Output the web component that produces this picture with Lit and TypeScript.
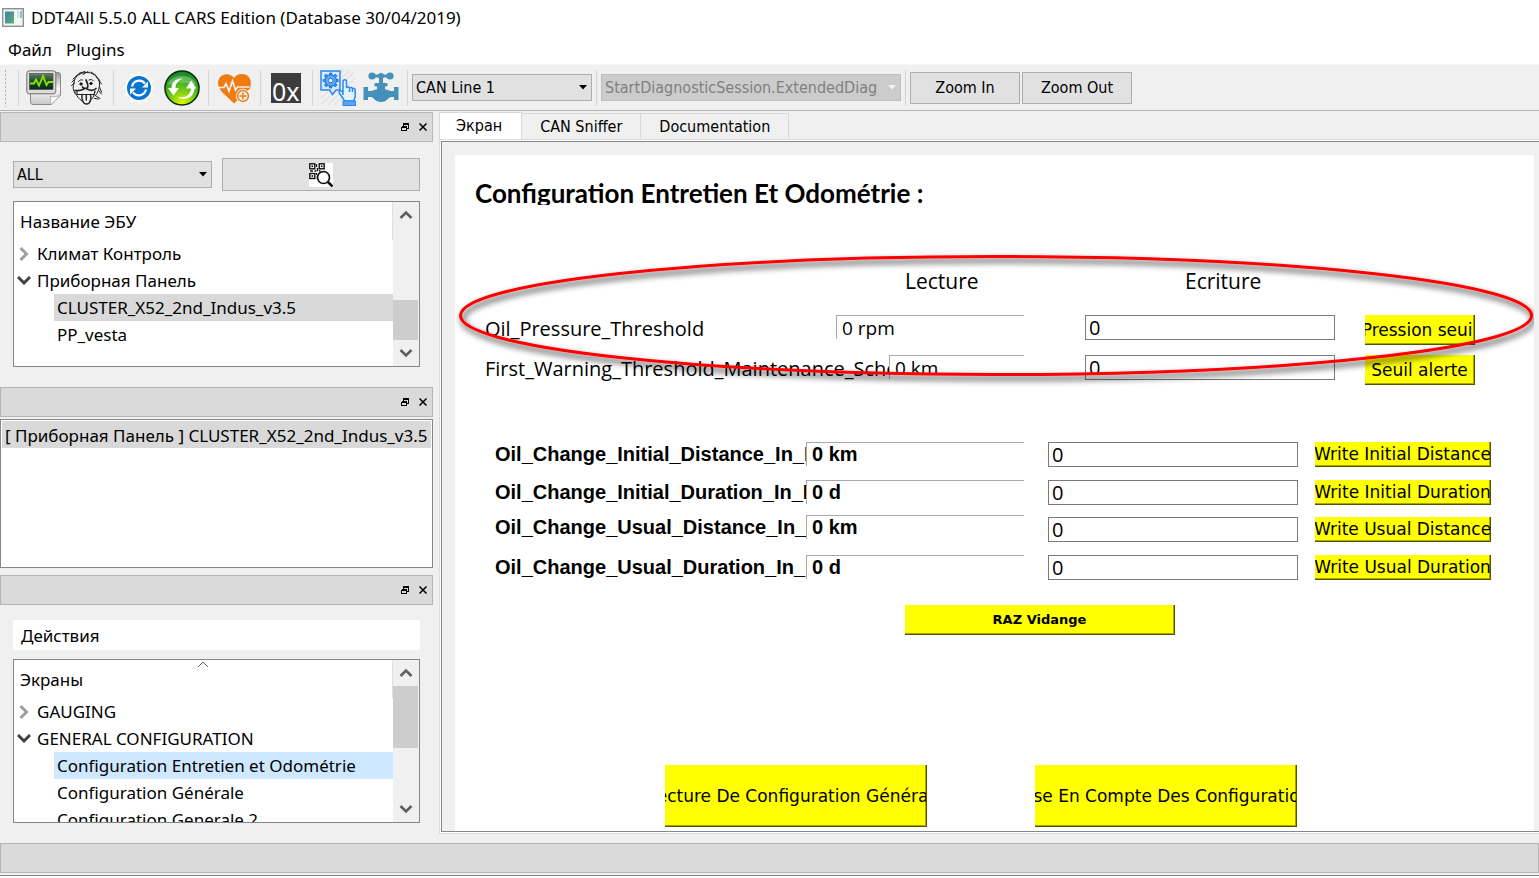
import { LitElement, html, css, svg, nothing } from "lit";
import { customElement, property } from "lit/decorators.js";
import { classMap } from "lit/directives/class-map.js";

const monitorIcon = html`<svg viewBox="0 0 36 36" width="36" height="36" aria-hidden="true">
  <defs>
    <linearGradient id="paper" x1="0" y1="0" x2="0" y2="1"><stop offset="0" stop-color="#999"/><stop offset=".5" stop-color="#fafafa"/><stop offset="1" stop-color="#c8c8c8"/></linearGradient>
    <linearGradient id="screen" x1="0" y1="0" x2="0" y2="1"><stop offset="0" stop-color="#6a7b6a"/><stop offset=".5" stop-color="#14492c"/><stop offset="1" stop-color="#0a2a18"/></linearGradient>
  </defs>
  <path d="M10 2.500H32a2.500 2.500 0 0 1 2.500 2.500V25l-9 9.500H7a2.500 2.500 0 0 1-2.500-2.500V10z" fill="url(#paper)" stroke="#8a8a8a"/>
  <path d="M34.500 25l-9 9.500c-2-1 .5-5-1.500-8 3 .8 8 0 10.500-1.500z" fill="#fff" stroke="#999" stroke-width=".7"/>
  <rect x=".8" y=".8" width="29" height="23" rx="2.500" fill="#dcdcdc" stroke="#6f6f6f"/>
  <rect x="3.500" y="3.500" width="23.500" height="16" fill="url(#screen)" stroke="#444" stroke-width=".6"/>
  <path d="M4 13.500h4l2-4 3 6 4-9.500 3.500 9 2-3h4.500" fill="none" stroke="#8be000" stroke-width="1.800"/>
</svg>`;

const faceIcon = html`<svg viewBox="0 0 36 36" width="36" height="36" fill="none" stroke="#222" stroke-width="1" stroke-linecap="round" aria-hidden="true">
  <path d="M5 13C5 6 12 2 19 2.500c6 .5 11 5 11.500 10.500.4 5-1.500 10-4.500 13"/>
  <path d="M5 13c-1.500 4-1 7 1 10.500M3 12l3-3M2.500 15.500l3-2.500M4 9l4-3.500M7 6l4-3M11 3l5-1.500M14 4.500l5-3M22 2l5 3.500M27 7l4 3.500M29.500 10l3 4M30.500 17l2 5M30 21l2.500 3M27 26l4 2.500M25.500 28.500l4 .5"/>
  <path d="M9.500 11.500c1-1.500 2.500-2 4-1.500M20 10c1.500-1 3.500-.5 4.500 1"/>
  <circle cx="12" cy="14" r="1.200" fill="#111"/><circle cx="22" cy="13.500" r="1.200" fill="#111"/>
  <path d="M17 10c1.500 3 2.500 5.500 1.500 7.500-1.500 1.500-4 1-5-.5M15 19c-2.500 1.200-6 2-9 1.500M18 19c4 2 7 1.500 9-.5" stroke-width="1.700"/>
  <path d="M6 22.500c2 4 4 6.500 7 8.500M26 21.500c-.5 4-2.500 7.500-5 9M8 24.500h17M8 21v3.500M26 21l-1 3.500"/>
  <path d="M13 24.500c-.5 4 .5 9.500 4.500 9.500s5-5.500 4-9.500M17.300 25v5" stroke-width="1.400"/>
</svg>`;

const gearTeeth = Array.from({ length: 12 }, (_, i) => i * 30);
const gearIcon = html`<svg viewBox="0 0 36 36" width="36" height="36" aria-hidden="true">
  <g fill="#fcfcfc" stroke="#e2e2e2" stroke-width=".5">
    ${gearTeeth.map((a) => svg`<path d="M14.500 5L16.500 1h3L21.500 5z" transform="rotate(${a} 18 18)"/>`)}
    <circle cx="18" cy="18" r="14.500"/>
  </g>
  <circle cx="18" cy="18" r="12" fill="#0a74d1"/>
  <g fill="none" stroke="#fff" stroke-width="2.200"><path d="M11 16.500a7.300 7.300 0 0 1 13-2.800"/><path d="M25 19.500a7.300 7.300 0 0 1-13 2.800"/></g>
  <path d="M27 11.500v6h-6zM9 24.500v-6h6z" fill="#fff"/>
</svg>`;

const refreshIcon = html`<svg viewBox="0 0 36 36" width="36" height="36" aria-hidden="true">
  <defs><radialGradient id="green" cx=".5" cy=".95" r=".9"><stop offset="0" stop-color="#e4f400"/><stop offset=".5" stop-color="#62c41c"/><stop offset="1" stop-color="#138a2c"/></radialGradient></defs>
  <circle cx="18" cy="18" r="17" fill="url(#green)" stroke="#0b2a08" stroke-width="1.500"/>
  <path d="M4 15C6 3 30 3 32 15c-7-3-21-3-28 0z" fill="#fff" opacity=".25"/>
  <path d="M19 8.500C12 8 7.500 12 7.500 18H4l5.500 7.500L15 18h-3.500c0-4.500 3-8 7.500-9.500z" fill="#fff"/>
  <path d="M12.500 26.500c7 3 14-1 14.500-8h-5L27 10.500 32.500 18.500H30.500C30 28 20 32 12.500 26.500z" fill="#fff"/>
</svg>`;

const heartIcon = html`<svg viewBox="0 0 36 36" width="36" height="36" aria-hidden="true">
  <path d="M18 8C14.500 3 7 3 3.500 8 .5 13 2.500 18.500 7 23l11 10.500 16-15C36 12 34.500 7.500 30.500 5 26 3 20.500 4 18 8z" fill="#f07c10"/>
  <path d="M1 17.500h7l2-4 3 7.500 3.500-10 3 9 2-3h12" fill="none" stroke="#f0f0f0" stroke-width="1.700"/>
  <circle cx="27" cy="26" r="7.200" fill="#f0f0f0"/>
  <circle cx="27" cy="26" r="5.400" fill="none" stroke="#f07c10" stroke-width="1.500"/>
  <path d="M27 22.500v7M23.500 26h7" stroke="#f07c10" stroke-width="1.500"/>
</svg>`;

const handIcon = html`<svg viewBox="0 0 36 36" width="36" height="36" aria-hidden="true">
  <path d="M2 34L28 8M8 35L35 8M1 28l10-10M14 35l10-10M20 4l4-4M22 8l8-8M28 8l6-6" stroke="#e2e2e2" stroke-width="1.200"/>
  <path d="M1 1h19v19h-4l-3.500 4.500L9.500 20H1z" fill="#d8ebff" stroke="#2a86f0" stroke-width="1.500"/>
  <g fill="#62a9f5" stroke="#1a74e0" stroke-width="1">
    ${[0, 45, 90, 135, 180, 225, 270, 315].map((a) => svg`<path d="M9.300 5l.4-2h2l.4 2z" transform="rotate(${a} 10.700 10.500)"/>`)}
    <circle cx="10.700" cy="10.500" r="5.600"/>
  </g>
  <circle cx="10.700" cy="10.500" r="2.300" fill="#eef6ff" stroke="#1a74e0"/>
  <path d="M23 25V11.500c0-2.500 3.500-2.500 3.500 0V18c.5-1.500 3-1.300 3 .3.500-1.300 3-1 3 .6.600-1 2.700-.6 2.700 1V26c0 2-1.200 3-1.500 5H24.500c-.5-2.500-5-6-5.500-9 .3-2 2.500-1.500 4 .5M29.500 18.500V22M32.500 19V22" fill="#e6f2ff" stroke="#2a86f0" stroke-width="1.500"/>
  <rect x="23" y="31" width="12.500" height="4.500" fill="#5aa5f5" stroke="#2a86f0"/>
</svg>`;

const valveIcon = html`<svg viewBox="0 0 36 36" width="36" height="36" fill="#4490b8" aria-hidden="true">
  <circle cx="9" cy="6" r="3.600"/><circle cx="27" cy="6" r="3.600"/><rect x="9" y="4.500" width="18" height="3"/><circle cx="18" cy="6" r="3"/>
  <rect x="16" y="6" width="4" height="9"/><rect x="11.500" y="13" width="13" height="3.500" rx="1.200"/>
  <path d="M14 16h8v3.500h1c2 0 3 1.500 5 1.500h3v-4h4.500v13H31v-3h-3c-2.500 0-4 5-10 5s-7.500-5-10-5H5v3H.5V17H5v4h3c2 0 3-1.500 5-1.500h1z"/>
</svg>`;

const qrIcon = html`<svg viewBox="0 0 24 24" width="24" height="24" aria-hidden="true">
  <rect width="24" height="24" fill="#fff"/>
  <g fill="none" stroke="#111" stroke-width="1.400">
    <rect x=".8" y=".8" width="5" height="5"/><rect x="10.200" y=".8" width="5" height="5"/><rect x=".8" y="10.500" width="5" height="5"/>
    <path d="M7.500 1v3M8.500 5v3M1 8h3M5.500 8h2M10 8h1.500M7.500 10v2M8.500 13.500V16"/>
    <circle cx="14.500" cy="14.500" r="6" fill="#fff" stroke-width="1.700"/>
  </g>
  <rect x="2.500" y="2.500" width="1.600" height="1.600"/><rect x="11.900" y="2.500" width="1.600" height="1.600"/><rect x="2.500" y="12.200" width="1.600" height="1.600"/>
  <path d="M19 19l4.500 4.500" stroke="#111" stroke-width="2.600"/>
</svg>`;

const reset = css`
  *, *::before, *::after { box-sizing: border-box; }
  button, input, select { font: inherit; color: inherit; margin: 0; border-radius: 0; }
  button { padding: 0; border: 0; background: none; }
`;

@customElement("dock-title")
class DockTitle extends LitElement {
  @property({ type: Boolean }) plain = false;
  static styles = [reset, css`
    :host { display: flex; align-items: center; justify-content: flex-end; gap: 8px; height: 30px; flex: none;
      padding-right: 4px; border: 1px solid #b6b6b6; background: #dadada; }
    button { display: flex; width: 10px; height: 10px; }
  `];
  render() {
    return this.plain ? nothing : html`
      <button aria-label="Float"><svg width="10" height="10" viewBox="0 0 10 10" fill="none" stroke="#000" shape-rendering="crispEdges"><path d="M3 4V1.500h5.500V6H6M3 2h6M1 5h5.500M1.500 4.500v4h5v-4h-5"/></svg></button>
      <button aria-label="Close"><svg width="10" height="10" viewBox="0 0 10 10"><path d="M1.500 1.500l7 7M8.500 1.500l-7 7" stroke="#000" stroke-width="1.500"/></svg></button>`;
  }
}

interface Node { text: string; open?: boolean; child?: boolean; mark?: "grey" | "blue"; }

@customElement("item-tree")
class ItemTree extends LitElement {
  @property() heading = "";
  @property({ attribute: false }) nodes: Node[] = [];
  @property({ type: Number }) before = 0;
  @property({ type: Number }) thumb = 0;
  @property({ type: Boolean }) sorted = false;
  static styles = [reset, css`
    :host { display: flex; border: 1px solid #828790; background: #fff; overflow: hidden; }
    .list { flex: 1; min-width: 0; display: flex; flex-direction: column; }
    .head { flex: none; height: 38px; line-height: 40px; padding-left: 6px; border-right: 1px solid #dedede; position: relative; }
    .sort { position: absolute; left: 50%; top: 1px; margin-left: -6px; }
    .row { flex: none; display: flex; align-items: center; height: 27px; white-space: nowrap; }
    .twist { width: 23px; padding-left: 3px; display: flex; }
    .child { margin-left: 40px; padding-left: 3px; }
    .grey { background: #d9d9d9; }
    .blue { background: #cde8ff; }
    .bar { flex: none; width: 26px; display: flex; flex-direction: column; background: #f0f0f0; }
    .bar button { height: 26px; flex: none; display: flex; align-items: center; justify-content: center; }
    .track { flex: 1; }
    .thumb { width: 25px; background: #cdcdcd; }
    svg { fill: none; }
  `];
  render() {
    return html`
      <div class="list" role="tree" aria-label=${this.heading}>
        <div class="head">${this.heading}${this.sorted ? html`<svg class="sort" width="12" height="7"><path d="M1 6l5-5 5 5" stroke="#666"/></svg>` : nothing}</div>
        ${this.nodes.map((n) => html`
          <div role="treeitem" class=${classMap({ row: true, child: !!n.child, grey: n.mark === "grey", blue: n.mark === "blue" })}>
            ${n.child ? nothing : html`<span class="twist">${n.open
              ? html`<svg width="14" height="12"><path d="M1 2l6 6 6-6" stroke="#404040" stroke-width="3"/></svg>`
              : html`<svg width="14" height="14"><path d="M3.500 1l6 6-6 6" stroke="#a0a0a0" stroke-width="3"/></svg>`}</span>`}
            <span>${n.text}</span>
          </div>`)}
      </div>
      <div class="bar">
        <button aria-label="Scroll up"><svg width="14" height="10"><path d="M1.500 8L7 2.500 12.500 8" stroke="#606060" stroke-width="2.600"/></svg></button>
        <div class="track"><div style="height:${this.before}%"></div><div class="thumb" style="height:${this.thumb}%"></div></div>
        <button aria-label="Scroll down"><svg width="14" height="10"><path d="M1.500 2L7 7.500 12.500 2" stroke="#606060" stroke-width="2.600"/></svg></button>
      </div>`;
  }
}

const ecus: Node[] = [
  { text: "Климат Контроль" },
  { text: "Приборная Панель", open: true },
  { text: "CLUSTER_X52_2nd_Indus_v3.5", child: true, mark: "grey" },
  { text: "PP_vesta", child: true },
];
const screens: Node[] = [
  { text: "GAUGING" },
  { text: "GENERAL CONFIGURATION", open: true },
  { text: "Configuration Entretien et Odométrie", child: true, mark: "blue" },
  { text: "Configuration Générale", child: true },
  { text: "Configuration Generale 2", child: true },
];
const thresholds = [
  { id: "oil", cls: "oil", label: "Oil_Pressure_Threshold", value: "0 rpm", action: "Pression seuil" },
  { id: "warn", cls: "warn", label: "First_Warning_Threshold_Maintenance_Schedule", value: "0 km", action: "Seuil alerte" },
];
const changes = [
  { id: "c1", label: "Oil_Change_Initial_Distance_In_Km", value: "0 km", action: "Write Initial Distance", low: false },
  { id: "c2", label: "Oil_Change_Initial_Duration_In_Days", value: "0 d", action: "Write Initial Duration", low: false },
  { id: "c3", label: "Oil_Change_Usual_Distance_In_Km", value: "0 km", action: "Write Usual Distance", low: true },
  { id: "c4", label: "Oil_Change_Usual_Duration_In_Days", value: "0 d", action: "Write Usual Duration", low: false },
];

@customElement("screen-form")
class ScreenForm extends LitElement {
  static styles = [reset, css`
    :host { display: block; position: relative; background: #fff; overflow: hidden; padding-top: 20px;
      font: 20px/26px "Open Sans", "Noto Sans", sans-serif; color: #000; }
    h1 { margin: 0 20px; height: 30px; overflow: hidden; font: bold 26px/36px Lato, "Open Sans", sans-serif; }
    .heads { display: grid; grid-template-columns: 280px 1fr; margin: 60px 0 0 450px; font-size: 21px; line-height: 32px; }
    .row { display: grid; height: 30px; margin: 0 0 10px 30px; align-items: start; line-height: 28px; }
    .oil { grid-template-columns: 351px 188px 61px 250px 30px 110px; margin-top: 18px; }
    .warn { grid-template-columns: 404px 135px 61px 250px 30px 110px; }
    .changes { display: grid; grid-template-columns: 311px 218px 24px 250px 17px 176px; grid-template-rows: 38px 35px 40px 25px;
      align-items: start; margin: 57px 0 0 40px; font: bold 20px/24px "Liberation Sans", sans-serif; }
    label { overflow: hidden; white-space: nowrap; }
    output { height: 24px; line-height: 24px; padding-left: 5px; border: solid #a8a8a8; border-width: 1px 0 0 1px; white-space: nowrap; overflow: hidden; }
    .row output { font-size: 19px; }
    .changes output { line-height: 22px; }
    input { grid-column: 4; width: 100%; height: 25px; padding: 0 3px; border: 1px solid #7a7a7a; background: #fff; outline: 0;
      font: 20px/23px "Open Sans", "Noto Sans", sans-serif; }
    button { display: flex; align-items: center; justify-content: center; height: 30px; overflow: hidden; white-space: nowrap;
      background: #ff0; border: solid #555500; border-width: 0 1px 1px 0; box-shadow: inset -1px -1px #a8a800;
      font: 17px/22px "DejaVu Sans", Verdana, sans-serif; }
    .row button, .changes button { grid-column: 6; }
    .changes button { height: 25px; }
    .low { margin-top: 2px; }
    .reset { width: 270px; margin: 25px 0 0 450px; font-size: 13px; font-weight: bold; }
    .actions { display: flex; gap: 108px; margin: 130px 0 0 210px; }
    .actions button { width: 262px; height: 62px; flex: none; }
    .ring { position: absolute; left: 0; top: 92px; width: 1084px; height: 140px; pointer-events: none; }
  `];
  render() {
    return html`
      <h1>Configuration Entretien Et Odométrie :</h1>
      <div class="heads"><span>Lecture</span><span>Ecriture</span></div>
      ${thresholds.map((t) => html`<div class="row ${t.cls}">
        <label for=${t.id}>${t.label}</label><output>${t.value}</output>
        <input id=${t.id} value="0"><button><span>${t.action}</span></button></div>`)}
      <div class="changes">${changes.map((t) => html`
        <label for=${t.id}>${t.label}</label><output>${t.value}</output>
        <input id=${t.id} class=${classMap({ low: t.low })} value="0"><button class=${classMap({ low: t.low })}><span>${t.action}</span></button>`)}
      </div>
      <button class="reset">RAZ Vidange</button>
      <div class="actions">
        <button><span>Lecture De Configuration Générale</span></button>
        <button><span>Prise En Compte Des Configurations</span></button>
      </div>
      <svg class="ring" viewBox="0 0 1084 140" aria-hidden="true">
        <defs><filter id="shade" x="-5%" y="-20%" width="110%" height="150%"><feDropShadow dx="2" dy="4" stdDeviation="3" flood-color="#000" flood-opacity=".85"/></filter></defs>
        <ellipse cx="541" cy="68.500" rx="535.500" ry="59" fill="none" stroke="#f00" stroke-width="3" filter="url(#shade)"/>
      </svg>`;
  }
}

@customElement("app-root")
class AppRoot extends LitElement {
  static styles = [reset, css`
    :host { display: flex; flex-direction: column; height: 100vh; overflow: hidden; background: #f0f0f0; color: #000;
      font: 17px/24px "Noto Sans", "Open Sans", sans-serif; }
    .title { display: flex; align-items: center; gap: 7px; height: 35px; padding-left: 2px; background: #fff; flex: none; }
    .menu { display: flex; gap: 14px; height: 29px; padding: 0 8px; align-items: center; background: #fff; flex: none; }
    .tools { display: flex; align-items: center; height: 47px; flex: none; padding-left: 4px; border-top: 1px solid #f8f8f8; border-bottom: 1px solid #b4b4b4; }
    .grip { width: 3px; height: 38px; margin-right: 3px; background: radial-gradient(circle, #b0b0b0 1px, transparent 1px) 0 0 / 3px 4px; }
    .sep { width: 1px; height: 36px; margin: 0 7px 0 8px; background: #d4d4d4; flex: none; }
    .tight { margin: 0 4px; }
    .end { margin-right: 4px; }
    .icon { display: flex; width: 36px; height: 36px; flex: none; }
    .icon + .icon { margin-left: 7px; }
    .hex { width: 30px; height: 30px; margin: 0 3px; background: #3c3c3c; color: #fff; overflow: hidden; align-items: flex-start;
      font: 25px/36px "Noto Sans", sans-serif; padding-left: 1px; white-space: nowrap; }
    .combo { position: relative; display: flex; flex: none; font: 16px/24px "DejaVu Sans Condensed", Tahoma, sans-serif; }
    .combo select { appearance: none; width: 100%; height: 27px; padding: 0 18px 0 3px; border: 1px solid #adadad; background: #e1e1e1; outline: 0; opacity: 1; }
    .combo select:disabled { background: #ccc; border-color: #bfbfbf; color: #808080; }
    .combo svg { position: absolute; right: 5px; top: 11px; }
    .line { width: 180px; }
    .session { width: 300px; }
    .push { height: 32px; width: 110px; margin-right: 2px; border: 1px solid #adadad; background: #e1e1e1; font: 16px/24px "DejaVu Sans Condensed", Tahoma, sans-serif; }
    .work { flex: 1; min-height: 0; display: flex; gap: 6px; padding-top: 1px; }
    .side { width: 433px; flex: none; display: flex; flex-direction: column; }
    .panel { display: flex; flex-direction: column; padding: 16px 13px 20px; }
    .filters { display: flex; align-items: center; gap: 10px; margin-bottom: 10px; }
    .filters .combo { width: 199px; }
    .scan { flex: 1; height: 33px; display: flex; align-items: center; justify-content: center; border: 1px solid #adadad; background: #e1e1e1; }
    .ecus { height: 166px; }
    .open { height: 149px; margin: 2px 0 7px; border: 1px solid #828790; background: #fff; padding: 1px; }
    .open div { height: 27px; line-height: 30px; padding-left: 3px; background: #d9d9d9; white-space: nowrap; overflow: hidden; }
    .last { flex: 1; min-height: 0; padding: 15px 13px 12px; }
    .acts { height: 30px; line-height: 32px; padding-left: 8px; background: #fff; margin-bottom: 9px; flex: none; }
    .screens { flex: 1; min-height: 0; }
    .main { flex: 1; min-width: 0; display: flex; flex-direction: column; }
    .tabs { display: flex; align-items: flex-end; height: 27px; flex: none; font: 16px/24px "DejaVu Sans Condensed", Tahoma, sans-serif; }
    .tabs button { height: 26px; padding: 0 18px; border: 1px solid #d9d9d9; border-width: 1px 1px 0 0; }
    .tabs .on { height: 27px; padding: 0 19px 0 16px; background: #fff; border-left-width: 1px; }
    .pane { flex: 1; min-height: 0; border: 1px solid #dcdcdc; border-right: 0; background: #fff; padding: 1px 0 1px 1px; display: flex; margin-bottom: 1px; }
    .frame { flex: 1; min-width: 0; border: 1px solid #828790; border-right: 0; background: #f0f0f0; padding: 13px 5px 0 13px; display: flex; }
    screen-form { flex: 1; min-width: 0; }
    .foot { margin-top: 8px; }
    .log { height: 3px; margin-top: 2px; border-top: 1px solid #828282; background: #fff; flex: none; }
  `];

  private arrow(color: string) {
    return html`<svg width="8" height="5" aria-hidden="true"><path d="M0 0h8L4 4.500z" fill=${color}/></svg>`;
  }

  render() {
    return html`
      <header class="title">
        <svg width="22" height="19" viewBox="0 0 22 19" aria-hidden="true"><defs><linearGradient id="win" x1="0" y1="0" x2="1" y2="1"><stop offset="0" stop-color="#3f7fa8"/><stop offset="1" stop-color="#5fb070"/></linearGradient></defs>
          <rect x=".7" y=".7" width="20.600" height="17.600" fill="#f4f4f4" stroke="#8c9096" stroke-width="1.400"/><rect x="3" y="3.500" width="9" height="12" fill="url(#win)"/><rect x="15" y="3" width="2" height="7" fill="#cfe0f0"/><rect x="18" y="3" width="2" height="7" fill="#8fc4a0"/></svg>
        <span>DDT4All 5.5.0 ALL CARS Edition (Database 30/04/2019)</span>
      </header>
      <nav class="menu"><button>Файл</button><button>Plugins</button></nav>
      <div class="tools">
        <div class="grip"></div><div class="sep"></div>
        <button class="icon" aria-label="Diagnostic">${monitorIcon}</button><button class="icon" aria-label="Expert">${faceIcon}</button>
        <div class="sep"></div>
        <button class="icon" aria-label="Auto refresh">${gearIcon}</button><button class="icon" aria-label="Refresh">${refreshIcon}</button>
        <div class="sep"></div>
        <button class="icon" aria-label="Keep alive">${heartIcon}</button>
        <div class="sep"></div>
        <button class="icon hex">0x</button>
        <div class="sep"></div>
        <button class="icon" aria-label="Command">${handIcon}</button><button class="icon" aria-label="Flow control">${valveIcon}</button>
        <div class="sep end"></div>
        <div class="combo line"><select aria-label="Line"><option>CAN Line 1</option></select>${this.arrow("#000")}</div>
        <div class="sep tight"></div>
        <div class="combo session"><select aria-label="Session" disabled><option>StartDiagnosticSession.ExtendedDiag</option></select>${this.arrow("#f4f4f4")}</div>
        <div class="sep tight"></div>
        <button class="push">Zoom In</button><button class="push">Zoom Out</button>
      </div>
      <div class="work">
        <aside class="side">
          <dock-title></dock-title>
          <section class="panel">
            <div class="filters">
              <div class="combo"><select aria-label="Vehicle"><option>ALL</option></select>${this.arrow("#000")}</div>
              <button class="scan" aria-label="Scan">${qrIcon}</button>
            </div>
            <item-tree class="ecus" heading="Название ЭБУ" .nodes=${ecus} .before=${64} .thumb=${36}></item-tree>
          </section>
          <dock-title></dock-title>
          <div class="open"><div>[ Приборная Панель ] CLUSTER_X52_2nd_Indus_v3.5</div></div>
          <dock-title></dock-title>
          <section class="panel last">
            <div class="acts">Действия</div>
            <item-tree class="screens" heading="Экраны" sorted .nodes=${screens} .before=${0} .thumb=${56}></item-tree>
          </section>
        </aside>
        <main class="main">
          <div class="tabs" role="tablist"><button role="tab" class="on">Экран</button><button role="tab">CAN Sniffer</button><button role="tab">Documentation</button></div>
          <div class="pane"><div class="frame"><screen-form></screen-form></div></div>
        </main>
      </div>
      <dock-title class="foot" plain></dock-title>
      <div class="log"></div>`;
  }
}
